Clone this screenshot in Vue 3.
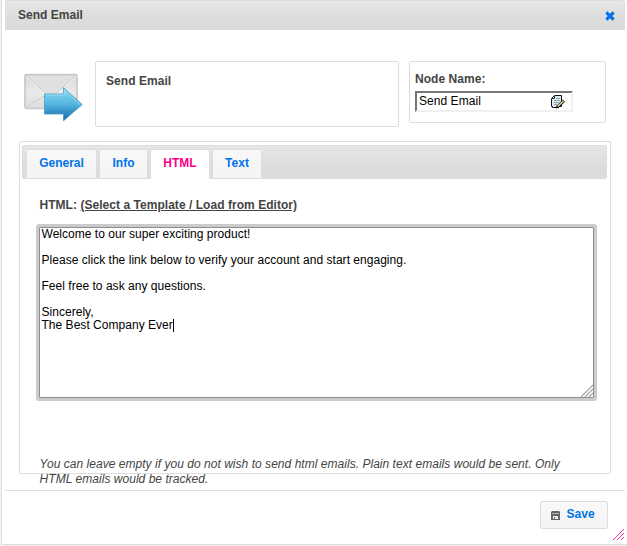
<script setup>
import { ref } from 'vue'

const tabs = [
  { name: 'General', width: 71 },
  { name: 'Info', width: 49 },
  { name: 'HTML', width: 60 },
  { name: 'Text', width: 50 },
]
const active = ref('HTML')
const lines = [
  'Welcome to our super exciting product!',
  '',
  'Please click the link below to verify your account and start engaging.',
  '',
  'Feel free to ask any questions.',
  '',
  'Sincerely,',
  'The Best Company Ever',
]
</script>

<template>
  <div class="page">
    <div class="dialog">
      <header class="titlebar">
        <span>Send Email</span>
        <svg class="close" width="10" height="10" viewBox="0 0 10 10"><path d="M2.4 0.3 L5 2.7 L7.6 0.3 L9.7 2.4 L7.3 5 L9.7 7.6 L7.6 9.7 L5 7.3 L2.4 9.7 L0.3 7.6 L2.7 5 L0.3 2.4Z" fill="#0073ea" /></svg>
      </header>

      <section class="summary">
        <svg class="mail" width="61" height="50" viewBox="0 0 61 50">
          <defs>
            <linearGradient id="paper" x1="0" y1="0" x2="0" y2="1">
              <stop offset="0" stop-color="#d6d6d7" /><stop offset=".5" stop-color="#e9e9eb" /><stop offset="1" stop-color="#dcdcde" />
            </linearGradient>
            <linearGradient id="arrow" x1="0" y1="0" x2="0" y2="1">
              <stop offset="0" stop-color="#8bdcf5" /><stop offset=".5" stop-color="#56b4df" /><stop offset="1" stop-color="#1268a8" />
            </linearGradient>
          </defs>
          <rect x="1" y="1.5" width="52" height="34" rx="1.5" fill="url(#paper)" stroke="#c8c8c8" stroke-width="1.7" />
          <path d="M3 3 L24 23 H31 L52 3Z" fill="#e0e0e1" />
          <path d="M2 3 L23 22 Q27 25 31 22 L52 3 M2 34 L22 22 M52 34 L32 21" fill="none" stroke="#f8f8f8" stroke-width="2" />
          <path d="M2 2.5 L23 21.5 Q27 24 31 21.5 L52 2.5 M2 34 L22 22" fill="none" stroke="#bcbcbd" />
          <path d="M20.5 21 H39.5 V14.8 L58.2 31.5 L39.5 47.8 V41 H20.5Z" fill="url(#arrow)" stroke="#3f9bc7" stroke-width=".8" />
          <path d="M21.5 22 H40.3 V17 L56 31.5" fill="none" stroke="#a5e0f3" stroke-width=".8" />
        </svg>
        <div class="card description">Send Email</div>
        <div class="card node">
          <label>Node Name:</label>
          <div class="field">
            <span>Send Email</span>
            <svg width="14" height="14" viewBox="0 0 14 14">
              <path d="M3.5 .5H10.5V11.5H7.5V12.5H1.5V11.5H.5V3.5L3.5 .5Z" fill="#d8ecef" stroke="#151515" />
              <path d="M1 3.5H3.5V1" fill="none" stroke="#333" />
              <path d="M5 3.5H9M3 5.5H9M3 7.5H8M3 9.5H6" stroke="#8eabb2" />
              <path d="M6 12.3 L13 5.6" stroke="#171717" stroke-width="3" />
              <path d="M6.8 11.4 L12.6 5.8" stroke="#dfcc9c" stroke-width="1.5" />
              <path d="M5 13.2 L7 12.3" stroke="#222" />
            </svg>
          </div>
        </div>
      </section>

      <section class="tabs">
        <nav>
          <button v-for="tab in tabs" :key="tab.name" :class="{ active: active === tab.name }" :style="{ width: tab.width + 'px' }" @click="active = tab.name">{{ tab.name }}</button>
        </nav>
        <div class="panel">
          <div class="prompt">HTML: <a>(Select a Template / Load from Editor)</a></div>
          <div class="editor">
            <div v-for="(line, i) in lines" :key="i" class="line">{{ line }}<i v-if="i === lines.length - 1" class="caret"></i></div>
            <svg class="grip" width="13" height="13" viewBox="0 0 13 13"><path d="M1 13 L13 1 M5 13 L13 5 M9 13 L13 9" stroke="#a0a0a0" stroke-width="1.1" /></svg>
          </div>
          <p class="hint">You can leave empty if you do not wish to send html emails. Plain text emails would be sent. Only<br>HTML emails would be tracked.</p>
        </div>
      </section>

      <footer>
        <button class="save">
          <svg width="9" height="9" viewBox="0 0 9 9"><path d="M1 0H8L9 1V9H0V1Z" fill="#666" /><path d="M1 2H8V3H1Z" fill="#b4b4b4" /><path d="M2 5H7V8H2Z" fill="#f2f2f2" /><path d="M3 6H4V8H3Z" fill="#666" /></svg>
          <span>Save</span>
        </button>
      </footer>
      <svg class="resize" width="12" height="12" viewBox="0 0 12 12" shape-rendering="crispEdges"><path d="M0.5 11.5 L11.5 0.5 M4.5 11.5 L11.5 4.5 M8.5 11.5 L11.5 8.5" stroke="#e8309f" stroke-width="1" /></svg>
    </div>
  </div>
</template>

<style>
body { margin: 0; background: #fff; }
</style>

<style scoped>
* { box-sizing: border-box; }
.page { width: 627px; height: 546px; padding-left: 1px; background: #f2f2f2; overflow: hidden; font: 12px "Liberation Sans", Arial, sans-serif; color: #444; }
.dialog { position: relative; height: 545px; padding: 0 1px 0 3px; background: #fff; border-left: 1px solid #ddd; border-bottom: 1px solid #ddd; border-bottom-left-radius: 2px; display: flex; flex-direction: column; }
.titlebar { width: 620px; height: 30px; flex: none; border: 1px solid #ddd; border-radius: 2px 2px 0 0; background: linear-gradient(#e6e6e6, #dcdcdc 65%); display: flex; justify-content: space-between; padding: 7px 9.5px 0 12px; font-weight: bold; line-height: 14px; letter-spacing: .03px; }
.close { margin-top: 3px; }
.summary { display: flex; align-items: flex-start; padding: 31px 0 0 19px; height: 111px; flex: none; }
.mail { margin: 12px 10px 0 0; flex: none; }
.card { border: 1px solid #ddd; border-radius: 2px; font-weight: bold; letter-spacing: .05px; }
.description { width: 304px; height: 66px; margin-right: 10px; padding: 12px 10px; line-height: 14px; }
.node { width: 197px; height: 62px; padding: 10px 5px; line-height: 14px; }
.node label { display: block; height: 19px; }
.field { width: 158px; height: 21px; border: 2px solid; border-color: #777 #f0f0f0 #f0f0f0 #777; color: #000; display: flex; justify-content: space-between; padding: 2px 6px 0 2px; font-weight: normal; line-height: 13px; }
.tabs { width: 592px; height: 333px; flex: none; margin-left: 14px; border: 1px solid #ddd; border-radius: 2px; padding: 3px 3px 0 2px; }
nav { height: 34px; width: 585px; border: 1px solid #ddd; border-radius: 2px; background: linear-gradient(#e6e6e6, #dcdcdc 70%); display: flex; gap: 2px; padding: 3px 0 0 3px; }
nav button { height: 29px; border: 1px solid #ddd; border-bottom: 0; border-radius: 2px 2px 0 0; background: linear-gradient(#f8f8f8, #f4f4f4); color: #0073ea; font: bold 12px "Liberation Sans", sans-serif; padding: 0 0 3px; }
nav .active { height: 30px; background: #fff; color: #ff0084; padding-bottom: 4px; }
.panel { padding: 19px 10px 0 17px; }
.prompt { height: 29px; line-height: 14px; font-weight: bold; white-space: nowrap; padding-left: .5px; letter-spacing: .04px; }
.prompt a { text-decoration: underline; }
.editor { position: relative; width: 555px; height: 171px; border: 1px solid #8d8d8d; box-shadow: 0 0 0 3px #cbcbcd; border-radius: 1px; color: #000; padding: 0 1.5px; line-height: 13px; white-space: nowrap; letter-spacing: .028px; }
.line { height: 13px; }
.caret { display: inline-block; width: 1px; height: 13px; background: #000; vertical-align: top; }
.grip { position: absolute; right: 0; bottom: 0; }
.hint { margin: 59px 0 0; padding-left: .6px; font-style: italic; line-height: 15px; white-space: nowrap; letter-spacing: .033px; }
footer { width: 620px; height: 54px; flex: none; margin-top: 16px; border-top: 1px solid #ddd; display: flex; justify-content: flex-end; align-items: flex-start; padding: 10px 17px 0 0; }
.save { width: 68px; height: 28px; display: flex; padding: 5px 0 0 10px; gap: 6.6px; border: 1px solid #ddd; border-radius: 2px; background: linear-gradient(#f9f9f9, #f4f4f4); color: #0073ea; font: bold 12px/14px "Liberation Sans", sans-serif; }
.save svg { margin-top: 4px; }
.resize { position: absolute; left: 610px; bottom: 3px; }
</style>
